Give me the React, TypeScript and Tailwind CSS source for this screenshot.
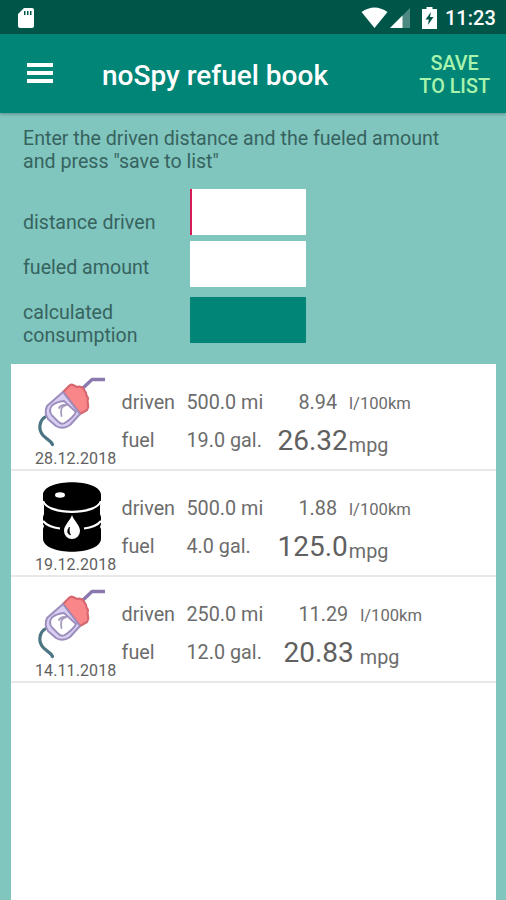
import React from "react";

type Kind = "pump" | "barrel";

interface Entry {
  kind: Kind;
  date: string;
  distance: string;
  fuel: string;
  metric: string;
  imperial: string;
  imperialClass: string;
  unitClass: string;
}

const entries: Entry[] = [
  { kind: "pump", date: "28.12.2018", distance: "500.0 mi", fuel: "19.0 gal.", metric: "8.94", imperial: "26.32", imperialClass: "", unitClass: "ml-px" },
  { kind: "barrel", date: "19.12.2018", distance: "500.0 mi", fuel: "4.0 gal.", metric: "1.88", imperial: "125.0", imperialClass: "", unitClass: "ml-px" },
  { kind: "pump", date: "14.11.2018", distance: "250.0 mi", fuel: "12.0 gal.", metric: "11.29", imperial: "20.83", imperialClass: "ml-[6px]", unitClass: "ml-[6px]" },
];

function PumpIcon() {
  return (
    <svg width="72" height="74" viewBox="0 0 72 74" fill="none" strokeLinecap="round" strokeLinejoin="round">
      <path d="M9 42C4 45 2 53 6 59c3 5 8 5 10.500 10.500" stroke="#4b7582" strokeWidth="3.2" />
      <path d="M47 13 56 4.500H69" stroke="#8b78ae" strokeWidth="3.4" strokeLinecap="butt" />
      <path d="m27 17 6-6q2-2 4-1l4 2q3-1 6 1l3 5q0 3 2 5-1 3 0 6 1 3-1 6l-7 4Z" fill="#f9878a" stroke="#d8666e" strokeWidth="2.2" />
      <path d="m27 17 17 22-10 11q-7 5-14 1l-8-7q-4-6-1-13Z" fill="#d9cff2" stroke="#9c8dbd" strokeWidth="2" />
      <path d="m28 26 12 11q-3 6-12 11.500-3 1-6-2l-6-6q-4-5 0-10 5-4 12-4.500Z" fill="#fff" stroke="#9c8dbd" strokeWidth="1.8" />
      <path d="M25.500 41c-1-5-1-10 5-11M23 33q2-4 7-3" stroke="#a79bbd" strokeWidth="1.8" />
    </svg>
  );
}

function BarrelIcon() {
  return (
    <svg width="72" height="74" viewBox="-2 0 72 74">
      <path d="M5 14C5-3 63-3 63 14v7l-1 3v9l1 3v7l-1 3 1 2v10C62 75 6 75 5 58V48l1-3-1-2v-7l1-3v-9l-1-3Z" fill="#000" />
      <path d="M5 20c5 14.500 53 14.500 58 0" fill="none" stroke="#fff" strokeWidth="2.2" />
      <path d="M5 40q5 6 17 7.500M63 40q-5 6-17 7.500" fill="none" stroke="#fff" strokeWidth="2.2" />
      <ellipse cx="22" cy="14" rx="5" ry="2.8" fill="#fff" />
      <path d="M34 34c-2 6-8 10-8 16a8 8 0 0 0 16 0c0-6-6-10-8-16Z" fill="#fff" />
      <path d="M31.500 46c-3 4-2 7 1 8-1.500-3-1.500-5-1-8Z" fill="#000" stroke="#000" strokeWidth=".7" />
    </svg>
  );
}

function EntryRow({ entry }: { entry: Entry }) {
  return (
    <li className="flex h-[106px] border-b-2 border-[#e8e8e8]">
      <div className="flex w-[110px] shrink-0 flex-col pl-[24px] pt-[10px]">
        <div className="ml-px h-[74px]">{entry.kind === "pump" ? <PumpIcon /> : <BarrelIcon />}</div>
        <span className="whitespace-nowrap text-[16px] leading-[20px] tracking-[0.1px] text-[#606060]">{entry.date}</span>
      </div>
      <div className="flex flex-col whitespace-nowrap pl-[0.5px] pt-[26px] text-[19.8px] leading-[24px] text-[#6c6c6c]">
        <div className="flex h-[38px] items-baseline">
          <span className="w-[65px]">driven</span>
          <span className="w-[112px]">{entry.distance}</span>
          <span>{entry.metric}</span>
          <span className="ml-[12px] text-[16.6px]">l/100km</span>
        </div>
        <div className="flex items-start">
          <span className="w-[65px]">fuel</span>
          <span className="w-[91px]">{entry.fuel}</span>
          <span className={`text-[28px] text-[#606060] ${entry.imperialClass}`}>{entry.imperial}</span>
          <span className={`pt-[5px] ${entry.unitClass}`}>mpg</span>
        </div>
      </div>
    </li>
  );
}

export default function App() {
  return (
    <div className="flex h-[900px] w-[506px] flex-col overflow-hidden bg-[#80c6be] font-[Roboto,sans-serif]">
      <div className="flex h-[34px] shrink-0 items-center bg-[#005549] pl-[18px] pr-[10px] pt-px text-white">
        <svg width="17" height="22" viewBox="0 0 17 22">
          <path fillRule="evenodd" d="M6 1h8q2 0 2 2v16q0 2-2 2H2q-2 0-2-2V7ZM6 4v4h1.500V4Zm3 0v4h1.500V4Zm3 0v4h1.500V4Z" fill="#fff" />
        </svg>
        <div className="ml-auto flex items-center">
          <svg width="27" height="21" viewBox="0 0 27 21"><path d="M0.500 5Q13.500-4 26.500 5L13.500 21Z" fill="#fff" /></svg>
          <svg className="ml-[2px]" width="20" height="20" viewBox="0 0 20 20">
            <path d="M20 0V20H0Z" fill="#4d8980" /><path d="M12.500 7.500V20H0Z" fill="#fff" />
          </svg>
          <svg className="ml-[12px]" width="15" height="22" viewBox="0 0 15 22">
            <path d="M4.500 0h6v2H15v20H0V2h4.500Z" fill="#fff" /><path d="M9 5 3.500 12.500h3.300L6 18l5.500-8H8Z" fill="#005549" />
          </svg>
          <span className="ml-[8px] w-[51px] whitespace-nowrap pt-px text-[20px] font-medium leading-[24px]">11:23</span>
        </div>
      </div>
      <header className="flex h-[79px] shrink-0 items-center bg-[#018577] pl-[27px] pr-[16px] shadow-[0_1px_3px_rgba(0,0,0,0.3)]">
        <button className="mb-px flex w-[26px] flex-col gap-1" aria-label="Menu">
          <i className="h-[4px] w-full bg-white" />
          <i className="h-[4px] w-full bg-white" />
          <i className="h-[4px] w-full bg-white" />
        </button>
        <h1 className="ml-[49px] whitespace-nowrap pt-[5px] text-[28px] font-medium leading-[32px] text-white">noSpy refuel book</h1>
        <button className="ml-auto whitespace-nowrap pt-[3px] text-center text-[19.8px] font-medium leading-[23px] text-[#a9f3ad]">
          SAVE<br />TO LIST
        </button>
      </header>
      <section className="flex h-[251px] shrink-0 flex-col pl-[23px] pt-[14px] text-[19.62px] leading-[23px] text-[#37635f]">
        <p className="h-[62px] whitespace-nowrap">
          Enter the driven distance and the fueled amount<br />and press "save to list"
        </p>
        <div className="flex h-[52px]">
          <label className="w-[167px] pt-[22px]">distance driven</label>
          <div className="h-[46px] w-[116px] border-l-2 border-[#d81b54] bg-white" />
        </div>
        <div className="flex h-[56px]">
          <label className="w-[167px] pt-[15px]">fueled amount</label>
          <div className="h-[46px] w-[116px] bg-white" />
        </div>
        <div className="flex">
          <label className="w-[167px] pt-[4px]">calculated<br />consumption</label>
          <div className="h-[46px] w-[116px] bg-[#018577]" />
        </div>
      </section>
      <ul className="ml-[11px] w-[485px] flex-1 bg-white pt-px">
        {entries.map((entry) => <EntryRow key={entry.date} entry={entry} />)}
      </ul>
    </div>
  );
}
